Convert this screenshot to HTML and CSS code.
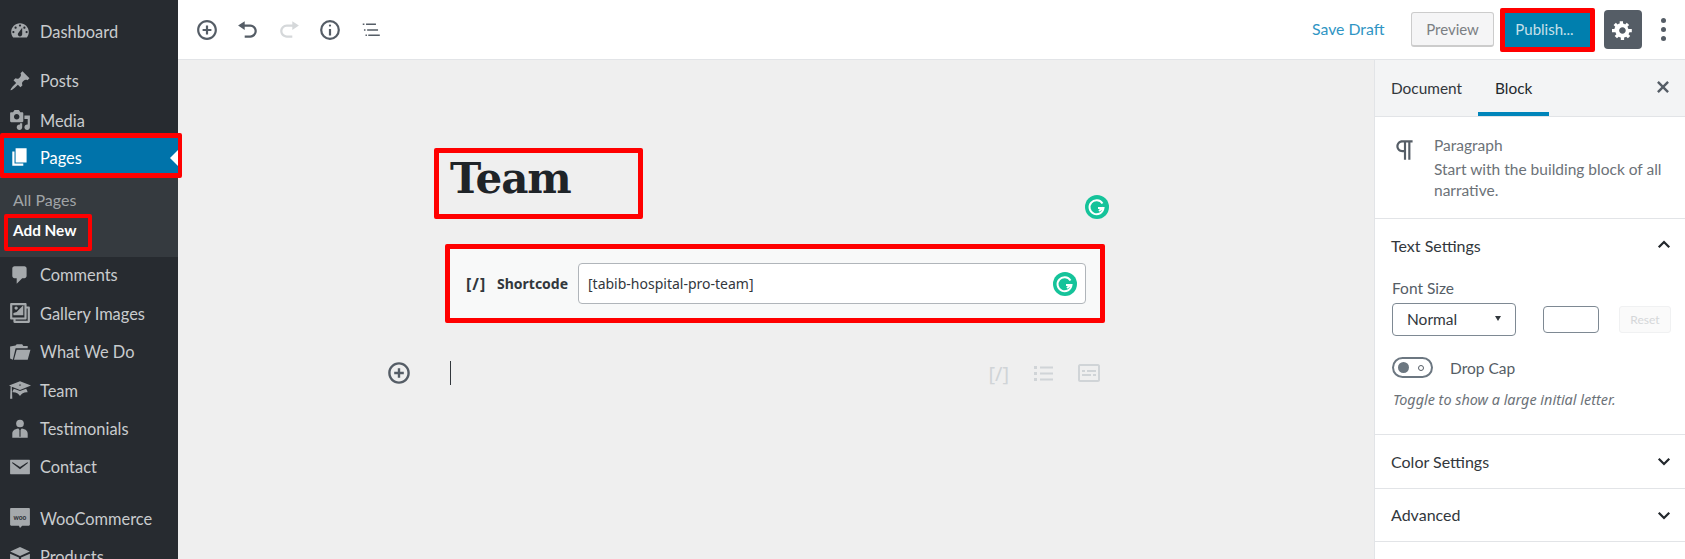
FILE: index.html
```html
<!DOCTYPE html>
<html lang="en">
<head>
  <meta charset="UTF-8">
  <title>Edit Page</title>
  <link rel="stylesheet" href="styles.css">
</head>
<body>

<div class="app">
  <!-- Admin menu -->
  <nav class="adminmenu">
    <a class="menu-item first"><svg viewBox="0 0 20 20"><path fill-rule="evenodd" d="M3.76 16h12.48c1.1-1.37 1.76-3.11 1.76-5 0-4.42-3.58-8-8-8s-8 3.58-8 8c0 1.89.66 3.63 1.76 5zM10 4c.55 0 1 .45 1 1s-.45 1-1 1-1-.45-1-1 .45-1 1-1zM6 6c.55 0 1 .45 1 1s-.45 1-1 1-1-.45-1-1 .45-1 1-1zm8 0c.55 0 1 .45 1 1s-.45 1-1 1-1-.45-1-1 .45-1 1-1zm-5.37 5.55L12 7v6c0 1.1-.9 2-2 2s-2-.9-2-2c0-.57.24-1.08.63-1.45zM4 10c.55 0 1 .45 1 1s-.45 1-1 1-1-.45-1-1 .45-1 1-1zm12 0c.55 0 1 .45 1 1s-.45 1-1 1-1-.45-1-1 .45-1 1-1z"/></svg>Dashboard</a>
    <a class="menu-item gap"><svg viewBox="0 0 20 20"><path d="M10.44 3.02l1.82-1.82 6.36 6.35-1.83 1.82c-1.05-.68-2.48-.57-3.41.36l-.75.75c-.92.93-1.04 2.35-.35 3.41l-1.83 1.82-2.41-2.41-2.8 2.79c-.42.42-3.38 2.71-3.8 2.29s1.86-3.39 2.28-3.81l2.79-2.79L4.1 9.36l1.83-1.82c1.05.69 2.48.57 3.4-.36l.75-.75c.93-.92 1.05-2.35.36-3.41z"/></svg>Posts</a>
    <a class="menu-item short"><svg viewBox="0 0 20 20"><path fill-rule="evenodd" d="M13 11V4c0-.55-.45-1-1-1h-1.67L9 1H5L3.67 3H2c-.55 0-1 .45-1 1v7c0 .55.45 1 1 1h10c.55 0 1-.45 1-1zM7 4.5c1.38 0 2.5 1.12 2.5 2.5S8.38 9.5 7 9.5 4.5 8.38 4.5 7 5.62 4.5 7 4.5zM14 6h5v10.5c0 1.38-1.12 2.5-2.5 2.5S14 17.88 14 16.5s1.12-2.5 2.5-2.5c.17 0 .34.02.5.05V9h-3V6zm-4 8.05V13h2v3.5c0 1.38-1.12 2.5-2.5 2.5S7 17.88 7 16.5 8.12 14 9.5 14c.17 0 .34.02.5.05z"/></svg>Media</a>
    <a class="menu-item current"><svg viewBox="0 0 20 20"><path d="M6 15V2h10v13H6zm-1 1h8v2H3V5h2v11z"/></svg>Pages</a>
    <div class="submenu">
      <a class="sub-item">All Pages</a>
      <a class="sub-item active">Add New</a>
    </div>
    <a class="menu-item"><svg viewBox="0 0 20 20"><path d="M5 2h9c1.1 0 2 .9 2 2v7c0 1.1-.9 2-2 2h-2l-5 5v-5H5c-1.1 0-2-.9-2-2V4c0-1.1.9-2 2-2z"/></svg>Comments</a>
    <a class="menu-item"><svg viewBox="0 0 20 20"><path fill-rule="evenodd" d="M16 4h1.96c.57 0 1.04.47 1.04 1.04v12.92c0 .57-.47 1.04-1.04 1.04H5.04C4.47 19 4 18.53 4 17.96V16H2.04C1.47 16 1 15.53 1 14.96V2.04C1 1.47 1.47 1 2.04 1h12.92c.57 0 1.04.47 1.04 1.04V4zM3 14h11V3H3v11zM8 5.5C8 4.67 7.33 4 6.5 4S5 4.67 5 5.5 5.67 7 6.5 7 8 6.33 8 5.5zM10 6l3-3v9H4v-2l3-1 3-3zM17 17V6h-1v8.96c0 .57-.47 1.04-1.04 1.04H6v1h11z"/></svg>Gallery Images</a>
    <a class="menu-item"><svg viewBox="0 0 20 20"><path d="M1 5l5-1 1-1h5l1 1.5h4v2H6L3.5 17 1 16zM7 8h12.500l-2.500 9H4.500z"/></svg>What We Do</a>
    <a class="menu-item"><svg viewBox="0 0 20 20"><path fill-rule="evenodd" d="M10 10L2.540 7.020 3 18H1l.48-11.410L0 6l10-4 10 4zM10 5c-.55 0-1 .22-1 .5s.45.5 1 .5 1-.22 1-.5-.45-.5-1-.5z"/><path d="M10 11l5.570-2.230c.71.94 1.200 2.070 1.360 3.300-.3-.04-.61-.07-.93-.07-2.550 0-4.780 1.370-6 3.410C8.780 13.370 6.550 12 4 12c-.32 0-.63.03-.93.07.16-1.230.65-2.360 1.360-3.300z"/></svg>Team</a>
    <a class="menu-item"><svg viewBox="0 0 20 20"><circle cx="10" cy="5" r="3.500"/><path d="M3 18v-3.500C3 11.500 5 10 8.500 9.500L9.500 11v6h1v-6l1-1.500c3.500.5 5.500 2 5.500 5V18z"/></svg>Testimonials</a>
    <a class="menu-item"><svg viewBox="0 0 20 20"><path fill-rule="evenodd" d="M1.500 3.500h17c.3 0 .5.200.5.500v12c0 .3-.2.500-.5.500h-17c-.3 0-.5-.2-.5-.5V4c0-.3.200-.5.500-.5zM3 6.500l7 5.500 7-5.500v-1l-7 4.500-7-4.500z"/></svg>Contact</a>
    <a class="menu-item gap-woo"><svg viewBox="0 0 20 20"><path d="M2 1h16c.6 0 1 .4 1 1v14c0 .6-.4 1-1 1h-6l-2 2-1-2H2c-.6 0-1-.4-1-1V2c0-.6.4-1 1-1z"/><text class="woo-mark" x="10" y="11.500" text-anchor="middle">woo</text></svg>WooCommerce</a>
    <a class="menu-item"><svg viewBox="0 0 20 20"><path d="M10 1l9 4-9 4-9-4zM1 7l8 3.500V19l-8-3.500zM19 7v8.500L11 19v-8.500z"/></svg>Products</a>
  </nav>

  <div class="workspace">
    <!-- Top toolbar -->
    <header class="topbar">
      <div class="tools">
        <svg class="tool" viewBox="0 0 20 20"><path fill-rule="evenodd" d="M10 1c-5 0-9 4-9 9s4 9 9 9 9-4 9-9-4-9-9-9zm0 16c-3.900 0-7-3.100-7-7s3.100-7 7-7 7 3.100 7 7-3.100 7-7 7zm1-11H9v3H6v2h3v3h2v-3h3V9h-3V6z"/></svg>
        <svg class="tool" viewBox="0 0 20 20"><path d="M12 5H7V2L1 6l6 4V7h5c2.200 0 4 1.800 4 4s-1.800 4-4 4H7v2h5c3.300 0 6-2.700 6-6s-2.700-6-6-6z"/></svg>
        <svg class="tool off" viewBox="0 0 20 20"><path d="M8 5h5V2l6 4-6 4V7H8c-2.200 0-4 1.800-4 4s1.800 4 4 4h5v2H8c-3.300 0-6-2.700-6-6s2.700-6 6-6z"/></svg>
        <svg class="tool" viewBox="0 0 20 20"><path fill-rule="evenodd" d="M10 1a9 9 0 1 0 0 18 9 9 0 0 0 0-18zm0 2a7 7 0 1 1 0 14 7 7 0 0 1 0-14zm1 3c0-.55-.45-1-1-1s-1 .45-1 1 .45 1 1 1 1-.45 1-1zm0 9V9H9v6h2z"/></svg>
        <svg class="tool" viewBox="0 0 20 20"><path d="M2.500 4h1.500v1.400H2.500zM5.500 4h9v1.400h-9zM3.600 9.300h1.400v1.400H3.600zM6.500 9.300h9.900v1.400H6.500zM5 14h1.300v1.400H5zM7.500 14H18v1.400H7.500z"/></svg>
      </div>
      <div class="actions">
        <a class="save-draft">Save Draft</a>
        <button class="btn-preview">Preview</button>
        <button class="btn-publish">Publish...</button>
        <button class="btn-settings"><svg viewBox="0 0 20 20"><path fill-rule="evenodd" d="M18 12h-2.180c-.17.7-.44 1.350-.81 1.930l1.540 1.540-2.100 2.100-1.540-1.540c-.58.36-1.230.63-1.910.79V19H8v-2.180c-.68-.16-1.330-.43-1.910-.79l-1.540 1.540-2.120-2.120 1.540-1.540c-.36-.58-.63-1.230-.79-1.910H0V9.030h2.170c.16-.7.44-1.350.8-1.940L1.430 5.550l2.100-2.100 1.540 1.540c.58-.37 1.240-.64 1.930-.81V2h3v2.180c.68.16 1.330.43 1.910.79l1.540-1.540 2.120 2.120-1.540 1.540c.36.59.64 1.240.8 1.940H18V12zm-8.500 1.500c1.660 0 3-1.340 3-3s-1.340-3-3-3-3 1.340-3 3 1.340 3 3 3z"/></svg></button>
        <div class="more"><i></i><i></i><i></i></div>
      </div>
    </header>

    <div class="body-row">
      <!-- Editor canvas -->
      <main class="canvas">
        <div class="editor">
          <h1 class="post-title">Team</h1>
          <svg class="grammarly title-g" viewBox="0 0 24 24"><circle cx="12" cy="12" r="12"/><path d="M17.500 8.500A7 7 0 1 0 18.500 13H13"/><path d="M14 16l4.500-3.500"/></svg>
          <div class="shortcode">
            <span class="sc-icon">[/]</span>
            <span class="sc-label">Shortcode</span>
            <div class="sc-input">[tabib-hospital-pro-team]
              <svg class="grammarly" viewBox="0 0 24 24"><circle cx="12" cy="12" r="12"/><path d="M17.500 8.500A7 7 0 1 0 18.500 13H13"/><path d="M14 16l4.500-3.500"/></svg>
            </div>
          </div>
          <div class="new-block">
            <svg class="inserter" viewBox="0 0 20 20"><path fill-rule="evenodd" d="M10 1c-5 0-9 4-9 9s4 9 9 9 9-4 9-9-4-9-9-9zm0 16c-3.900 0-7-3.100-7-7s3.100-7 7-7 7 3.100 7 7-3.100 7-7 7zm1-11H9v3H6v2h3v3h2v-3h3V9h-3V6z"/></svg>
            <span class="caret"></span>
            <div class="quick">
              <span class="quick-sc">[/]</span>
              <svg viewBox="0 0 24 24"><path d="M3 5h3v3H3zM9 5.500h13v2H9zM3 11h3v3H3zM9 11.500h13v2H9zM3 17h3v3H3zM9 17.500h13v2H9z"/></svg>
              <svg viewBox="0 0 24 24"><path fill-rule="evenodd" d="M3 3h18c1 0 2 1 2 2v14c0 1-1 2-2 2H3c-1 0-2-1-2-2V5c0-1 1-2 2-2zm0 2v14h18V5zM5 9h3v2H5zM10 9h9v2h-9zM5 13h9v2H5zM16 13h3v2h-3z"/></svg>
            </div>
          </div>
        </div>
      </main>

      <!-- Settings sidebar -->
      <aside class="settings">
        <div class="tabs">
          <span class="tab">Document</span>
          <span class="tab on">Block</span>
          <svg class="close" viewBox="0 0 20 20"><path d="M14.950 6.460L11.410 10l3.540 3.540-1.410 1.410L10 11.420l-3.530 3.530-1.420-1.420L8.580 10 5.050 6.470l1.420-1.420L10 8.580l3.540-3.530z"/></svg>
        </div>
        <section class="block-card">
          <svg class="pilcrow" viewBox="0 0 24 24"><path fill-rule="evenodd" d="M11 5v7H9.500C7.600 12 6 10.400 6 8.500S7.600 5 9.500 5H11m8-2H9.500C6.500 3 4 5.500 4 8.500S6.500 14 9.500 14H11v7h2V5h2v16h2V5h2V3z"/></svg>
          <div>
            <div class="card-name">Paragraph</div>
            <p class="card-desc">Start with the building block of all narrative.</p>
          </div>
        </section>
        <section class="panel open">
          <div class="panel-head">Text Settings <svg class="chev" viewBox="0 0 24 24"><path d="M5 15l7-7 7 7"/></svg></div>
          <div class="field-label">Font Size</div>
          <div class="font-row">
            <div class="select">Normal <span class="select-arrow"></span></div>
            <div class="num"></div>
            <div class="reset">Reset</div>
          </div>
          <div class="toggle-row">
            <div class="toggle"><i class="knob"></i><i class="ring"></i></div>
            <span>Drop Cap</span>
          </div>
          <p class="hint">Toggle to show a large initial letter.</p>
        </section>
        <section class="panel">
          <div class="panel-head">Color Settings <svg class="chev" viewBox="0 0 24 24"><path d="M5 9l7 7 7-7"/></svg></div>
        </section>
        <section class="panel">
          <div class="panel-head">Advanced <svg class="chev" viewBox="0 0 24 24"><path d="M5 9l7 7 7-7"/></svg></div>
        </section>
      </aside>
    </div>
  </div>
</div>

</body>
</html>
```

FILE: styles.css
```css
*, *::before, *::after {
  box-sizing: border-box;
}

html, body {
  margin: 0;
  height: 559px;
  overflow: hidden;
}

body {
  font-family: 'Lato', 'Open Sans', sans-serif;
  font-size: 15px;
  color: #32373c;
  background: #efefef;
}

.app {
  display: flex;
  height: 559px;
}

/* admin menu */
.adminmenu {
  width: 178px;
  flex: none;
  height: 559px;
  background: #272b30;
  color: #c9ccce;
  font-size: 16.4px;
  position: relative;
  z-index: 2;
}

.menu-item {
  display: flex;
  align-items: center;
  height: 38.4px;
  padding-left: 9px;
  padding-bottom: 2px;
  position: relative;
}

.menu-item svg {
  width: 22px;
  height: 22px;
  margin-right: 9px;
  flex: none;
  fill: #a5a9ac;
}

.menu-item.first { margin-top: 13px; }
.menu-item.gap { margin-top: 11px; }
.menu-item.short { height: 37px; padding: 2px 0 0 9px; }
.menu-item.gap-woo { margin-top: 13px; }
.woo-mark {
  font-size: 6px;
  font-weight: 700;
  fill: #272b30;
}

.menu-item.current {
  height: 40px;
  background: #0073aa;
  color: #fff;
  padding-bottom: 1px;
}

.menu-item.current svg { fill: #fff; }

.menu-item.current::before {
  content: "";
  position: absolute;
  right: 0;
  top: 12px;
  border: 8px solid transparent;
  border-right-color: #fff;
  border-left-width: 0;
}

/* red marks drawn on the screenshot */
.menu-item.current::after {
  content: "";
  position: absolute;
  left: 0;
  right: -4px;
  top: -5px;
  bottom: 0;
  border: 5px solid #f00;
  border-left-width: 4px;
  border-right-width: 4px;
  border-radius: 2px;
}

.submenu {
  background: #353a3f;
  padding: 6px 0 10px;
  height: 79px;
}

.sub-item {
  display: flex;
  align-items: center;
  height: 31px;
  padding-left: 13px;
  font-size: 16px;
  color: #a1a4a7;
  position: relative;
}

.sub-item.active {
  color: #fff;
  font-size: 15.3px;
  font-weight: 700;
}

.sub-item.active::after {
  content: "";
  position: absolute;
  left: 4px;
  width: 88px;
  top: -1px;
  height: 37px;
  border: 4px solid #f00;
  border-radius: 2px;
}

/* top bar */
.workspace {
  flex: 1;
  min-width: 0;
  display: flex;
  flex-direction: column;
}

.topbar {
  height: 60px;
  flex: none;
  background: #fff;
  border-bottom: 1px solid #e2e4e7;
  display: flex;
  justify-content: space-between;
  align-items: center;
}

.tools {
  display: flex;
  align-items: center;
  gap: 19px;
  padding-left: 18px;
}

.tool {
  width: 22px;
  height: 22px;
  fill: #555d66;
}

.tool.off { fill: #d5d8da; }

.actions {
  display: flex;
  align-items: center;
}

.save-draft {
  color: #2f95c4;
  font-size: 15.8px;
  width: 99px;
  padding-bottom: 2px;
}

.btn-preview {
  width: 83px;
  height: 35px;
  padding: 0 0 1px;
  font: inherit;
  font-size: 15px;
  color: #7b7f83;
  background: #f5f5f6;
  border: 1px solid #ccc;
  border-bottom-width: 2px;
  border-radius: 3px;
}

.btn-publish {
  width: 95px;
  height: 44px;
  margin-left: 6px;
  padding: 0 6px 2px 0;
  font: inherit;
  font-size: 15px;
  color: #c7e0ea;
  background: #007fae;
  border: 5px solid #f00;
  border-radius: 2px;
}

.btn-settings {
  width: 38px;
  height: 39px;
  margin-left: 9px;
  padding: 0;
  background: #555d66;
  border: 0;
  border-radius: 4px;
  display: flex;
  align-items: center;
  justify-content: center;
}

.btn-settings svg {
  width: 22px;
  height: 22px;
  fill: #fff;
}

.more {
  width: 43px;
  display: flex;
  flex-direction: column;
  align-items: center;
  gap: 4px;
}

.more i {
  width: 5px;
  height: 5px;
  border-radius: 50%;
  background: #555d66;
}

/* canvas */
.body-row {
  flex: 1;
  min-height: 0;
  display: flex;
}

.canvas {
  flex: 1;
  min-width: 0;
}

.editor {
  width: 660px;
  margin-left: 267px;
  position: relative;
}

.post-title {
  margin: 88px 0 0 -11px;
  width: 209px;
  height: 71px;
  border: 5px solid #f00;
  border-radius: 2px;
  padding-left: 11px;
  font-family: 'DejaVu Serif', 'Liberation Serif', serif;
  font-size: 42px;
  line-height: 52px;
  letter-spacing: -1px;
  font-weight: 700;
  color: #1f2428;
}

.grammarly {
  width: 24px;
  height: 24px;
  flex: none;
  fill: #15c39a;
}

.grammarly path {
  fill: none;
  stroke: #fff;
  stroke-width: 2;
}

.title-g {
  position: absolute;
  left: 640px;
  top: 47px;
}

.shortcode {
  margin-top: 25px;
  height: 79px;
  border: 5px solid #f00;
  border-radius: 2px;
  background: #f8f9f9;
  display: flex;
  align-items: center;
  padding: 0 14px 0 16px;
  font-family: 'Noto Sans', sans-serif;
}

.sc-icon {
  font-weight: 700;
  font-size: 16px;
  letter-spacing: 1px;
  width: 31px;
  color: #32373c;
}

.sc-label {
  font-weight: 700;
  font-size: 14px;
  width: 81px;
  color: #32373c;
}

.sc-input {
  flex: 1;
  height: 41px;
  background: #fff;
  border: 1px solid #b0b5ba;
  border-radius: 4px;
  font-size: 14px;
  color: #32373c;
  display: flex;
  align-items: center;
  justify-content: space-between;
  padding: 0 8px 0 9px;
}

.new-block {
  margin-top: 38px;
  height: 24px;
  display: flex;
  align-items: center;
  position: relative;
}

.inserter {
  width: 24px;
  height: 24px;
  fill: #555d66;
  position: absolute;
  left: -58px;
}

.caret {
  width: 1px;
  height: 24px;
  margin-left: 5px;
  background: #32373c;
}

.quick {
  margin-left: auto;
  display: flex;
  align-items: center;
  gap: 22px;
  margin-right: 4px;
}

.quick svg {
  width: 24px;
  height: 24px;
  fill: #d0d4d7;
}

.quick-sc {
  font-family: 'Noto Sans', sans-serif;
  font-size: 20px;
  color: #d0d4d7;
}

/* settings sidebar */
.settings {
  width: 311px;
  flex: none;
  background: #fff;
  border-left: 1px solid #e2e4e7;
  font-size: 15.5px;
  color: #555d66;
}

.tabs {
  height: 57px;
  background: #f3f4f5;
  border-bottom: 1px solid #e2e4e7;
  display: flex;
  align-items: center;
  padding-left: 16px;
  position: relative;
  color: #32373c;
  font-size: 15.4px;
}

.tab {
  height: 56px;
  line-height: 57px;
  margin-right: 33px;
  position: relative;
}

.tab.on { color: #23282d; }

.tab.on::after {
  content: "";
  position: absolute;
  left: -17px;
  right: -17px;
  bottom: 0;
  height: 4px;
  background: #0085ba;
}

.close {
  width: 24px;
  height: 24px;
  fill: #555d66;
  position: absolute;
  right: 10px;
  top: 15px;
}

.block-card {
  height: 102px;
  padding: 17px 17px 0;
  display: flex;
  border-bottom: 1px solid #e2e4e7;
}

.pilcrow {
  width: 26px;
  height: 26px;
  flex: none;
  margin: 3px 16px 0 0;
  fill: #555d66;
}

.card-name {
  color: #6c7278;
  line-height: 21px;
  margin-top: 1px;
  margin-bottom: 3px;
}

.card-desc {
  margin: 0;
  line-height: 21px;
  color: #6c7278;
}

.panel {
  border-bottom: 1px solid #e2e4e7;
  height: 53.5px;
}

.panel.open { height: 216px; }

.panel-head {
  height: 52px;
  padding: 0 12px 0 16px;
  display: flex;
  align-items: center;
  justify-content: space-between;
  font-size: 16px;
  color: #32373c;
}

.chev {
  width: 18px;
  height: 18px;
  fill: none;
  stroke: #23282d;
  stroke-width: 3;
}

.field-label {
  padding-left: 17px;
  line-height: 20px;
  margin-top: 7px;
  color: #555d66;
}

.font-row {
  display: flex;
  align-items: center;
  padding-left: 17px;
  margin-top: 5px;
}

.select {
  width: 124px;
  height: 33px;
  border: 1px solid #7e8993;
  border-radius: 4px;
  display: flex;
  align-items: center;
  justify-content: space-between;
  padding: 0 14px 2px;
  color: #32373c;
}

.select-arrow {
  border: 3px solid transparent;
  border-top: 5px solid #32373c;
  border-bottom-width: 0;
}

.num {
  width: 56px;
  height: 27px;
  margin-left: 27px;
  border: 1px solid #7e8993;
  border-radius: 4px;
}

.reset {
  width: 52px;
  height: 27px;
  margin-left: 20px;
  border: 1px solid #f0f1f2;
  border-radius: 3px;
  background: #fafafa;
  font-size: 12px;
  line-height: 25px;
  text-align: center;
  color: #d5d7d9;
}

.toggle-row {
  display: flex;
  align-items: center;
  gap: 17px;
  padding-left: 17px;
  margin-top: 21px;
}

.toggle {
  width: 41px;
  height: 21px;
  border: 2px solid #6c7781;
  border-radius: 11px;
  display: flex;
  align-items: center;
  justify-content: space-between;
  padding: 0 7px 0 4px;
}

.knob {
  width: 11px;
  height: 11px;
  border-radius: 50%;
  background: #6c7781;
}

.ring {
  width: 6px;
  height: 6px;
  border-radius: 50%;
  border: 1px solid #555d66;
}

.hint {
  margin: 12px 0 0 18px;
  font-family: 'Noto Sans', sans-serif;
  font-size: 14.4px;
  font-style: italic;
  color: #6c7278;
}
```
